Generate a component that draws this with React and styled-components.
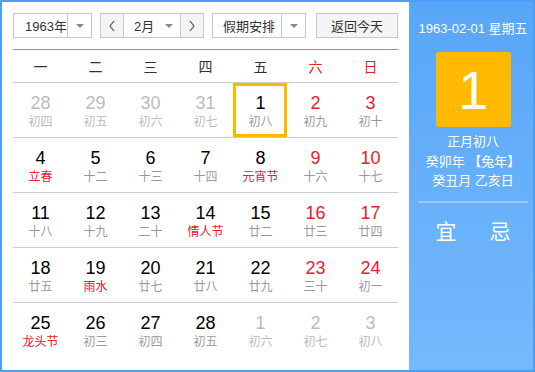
import React from 'react'
import styled, { createGlobalStyle } from 'styled-components'

const Global = createGlobalStyle`
  body {
    margin: 0;
    font-family: "Liberation Sans", "Noto Sans CJK SC", sans-serif;
  }
`;

const Frame = styled.div`
  width: 535px;
  height: 372px;
  box-sizing: border-box;
  border: 2px solid #4c9ef5;
  display: flex;
  background: #fff;
  overflow: hidden;
`;

const Main = styled.div`
  width: 407px;
  box-sizing: border-box;
  padding: 11px 11px 0 11px;
  display: flex;
  flex-direction: column;
`;

const Toolbar = styled.div`
  display: flex;
  height: 25px;
  padding-bottom: 11px;
  border-bottom: 1px solid #5aa4f2;
`;

const Select = styled.div`
  width: ${p => p.w}px;
  margin-right: ${p => p.gap || 0}px;
  height: 25px;
  box-sizing: border-box;
  border: 1px solid #c8c8c8;
  display: flex;
  font-size: 13px;
  color: #333;
`;

const SelectText = styled.div`
  flex: 1;
  display: flex;
  align-items: center;
  white-space: nowrap;
  padding-left: ${p => p.pad || 0}px;
`;

const Drop = styled.div`
  width: 23px;
  flex-shrink: 0;
  border-left: ${p => p.line ? '1px solid #c8c8c8' : 'none'};
  display: flex;
  align-items: center;
  justify-content: center;
  &::after {
    content: '';
    border-left: 4px solid transparent;
    border-right: 4px solid transparent;
    border-top: 4px solid #888;
  }
`;

const Step = styled.div`
  width: 22px;
  flex-shrink: 0;
  background: #f4f4f4;
  display: flex;
  align-items: center;
  justify-content: center;
  border-${p => p.side}: 1px solid #c8c8c8;
`;

const Button = styled.div`
  width: 82px;
  height: 25px;
  box-sizing: border-box;
  border: 1px solid #c8c8c8;
  background: #f5f5f5;
  display: flex;
  align-items: center;
  justify-content: center;
  font-size: 13px;
  color: #333;
`;

const Grid = styled.div`
  display: grid;
  grid-template-columns: repeat(7, 55px);
`;

const Head = styled.div`
  height: 32px;
  display: flex;
  align-items: center;
  justify-content: center;
  font-size: 14px;
  color: ${p => p.red ? '#e8202c' : '#333'};
  border-bottom: 1px solid #ccc;
`;

const Cell = styled.div`
  height: 55px;
  box-sizing: border-box;
  border-bottom: ${p => p.last ? 'none' : '1px solid #ccc'};
  position: relative;
  display: flex;
  flex-direction: column;
  align-items: center;
  padding-top: 10px;
  &::before {
    content: '';
    display: ${p => p.sel ? 'block' : 'none'};
    position: absolute;
    left: 0;
    top: 0;
    width: 54px;
    height: 54px;
    box-sizing: border-box;
    border: 3px solid #ffb800;
  }
`;

const Num = styled.div`
  font-size: 18px;
  line-height: 20px;
  color: ${p => p.c};
`;

const Lunar = styled.div`
  font-size: 12px;
  line-height: 18px;
  color: ${p => p.c};
`;

const Side = styled.div`
  flex: 1;
  background: linear-gradient(#58a6f7, #75b9fd);
  display: flex;
  flex-direction: column;
  align-items: center;
  color: #fff;
  padding-top: 18px;
`;

const DateLine = styled.div`
  font-size: 13px;
  line-height: 18px;
  margin-left: 4px;
`;

const BigDay = styled.div`
  width: 75px;
  height: 75px;
  margin-top: 14px;
  margin-left: 4px;
  border-radius: 3px;
  background: #ffba00;
  display: flex;
  align-items: center;
  justify-content: center;
  font-size: 54px;
`;

const Info = styled.div`
  margin-top: 5px;
  margin-left: 4px;
  font-size: 13px;
  line-height: 19.5px;
  text-align: center;
`;

const Divider = styled.div`
  width: 110px;
  height: 2px;
  background: #9ccafb;
  margin-top: 10px;
  margin-left: 4px;
`;

const Yiji = styled.div`
  display: flex;
  gap: 33px;
  font-size: 21px;
  margin-top: 12px;
  margin-left: 4px;
`;

const Chev = ({ dir }) => (
  <svg width="8" height="12" viewBox="0 0 8 12">
    <polyline points={dir === 'l' ? '6,1 2,6 6,11' : '2,1 6,6 2,11'} fill="none" stroke="#555" strokeWidth="1.2" />
  </svg>
);

const RED = '#e8202c';
const days = [
  [28, '初四', 'o'], [29, '初五', 'o'], [30, '初六', 'o'], [31, '初七', 'o'], [1, '初八', 'sel'], [2, '初九'], [3, '初十'],
  [4, '立春', 'f'], [5, '十二'], [6, '十三'], [7, '十四'], [8, '元宵节', 'f'], [9, '十六'], [10, '十七'],
  [11, '十八'], [12, '十九'], [13, '二十'], [14, '情人节', 'f'], [15, '廿二'], [16, '廿三'], [17, '廿四'],
  [18, '廿五'], [19, '雨水', 'f'], [20, '廿七'], [21, '廿八'], [22, '廿九'], [23, '三十'], [24, '初一'],
  [25, '龙头节', 'f'], [26, '初三'], [27, '初四'], [28, '初五'], [1, '初六', 'o'], [2, '初七', 'o'], [3, '初八', 'o'],
];

const weeks = ['一', '二', '三', '四', '五', '六', '日'];

const App = () => {
  return (
    <>
      <Global />
      <Frame>
        <Main>
          <Toolbar>
            <Select w={79} gap={8}>
              <SelectText pad={11}>1963年</SelectText>
              <Drop line />
            </Select>
            <Select w={104} gap={8}>
              <Step side="right"><Chev dir="l" /></Step>
              <SelectText pad={10}>2月</SelectText>
              <Drop />
              <Step side="left"><Chev dir="r" /></Step>
            </Select>
            <Select w={94} gap={10}>
              <SelectText pad={10}>假期安排</SelectText>
              <Drop line />
            </Select>
            <Button>返回今天</Button>
          </Toolbar>
          <Grid>
            {weeks.map((w, i) => <Head key={w} red={i > 4}>{w}</Head>)}
            {days.map(([n, l, t], i) => {
              const col = i % 7;
              const other = t === 'o';
              const numC = other ? '#bbb' : col > 4 ? RED : '#000';
              const lunC = t === 'f' ? RED : other ? '#bbb' : '#9a9a9a';
              return (
                <Cell key={i} sel={t === 'sel'} last={i >= 28}>
                  <Num c={numC}>{n}</Num>
                  <Lunar c={lunC}>{l}</Lunar>
                </Cell>
              );
            })}
          </Grid>
        </Main>
        <Side>
          <DateLine>1963-02-01 星期五</DateLine>
          <BigDay>1</BigDay>
          <Info>
            正月初八<br />
            癸卯年 【兔年】<br />
            癸丑月 乙亥日
          </Info>
          <Divider />
          <Yiji><span>宜</span><span>忌</span></Yiji>
        </Side>
      </Frame>
    </>
  )
}

export default App
